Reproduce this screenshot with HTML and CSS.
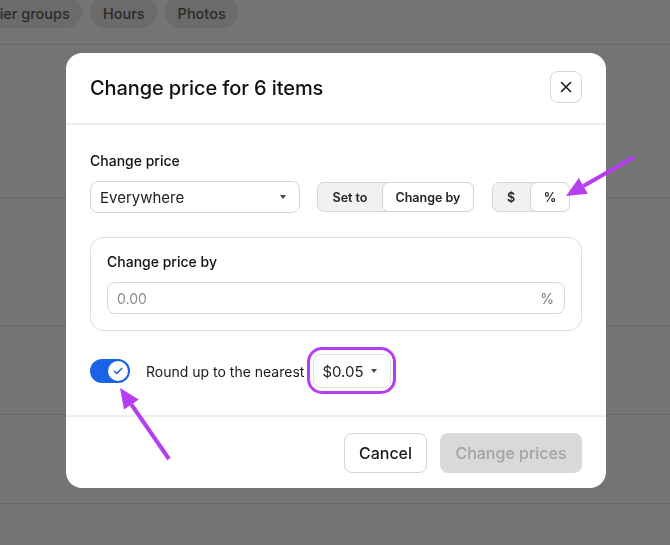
FILE: index.html
```html
<!DOCTYPE html>
<html lang="en">
<head>
<meta charset="utf-8">
<title>Change price</title>
<link rel="stylesheet" href="styles.css">
</head>
<body>
<div class="page">
  <div class="tabs">
    <span class="pill pill-first">Modifier groups</span>
    <span class="pill">Hours</span>
    <span class="pill">Photos</span>
  </div>
  <div class="row row-a"></div>
  <div class="row row-b"></div>
  <div class="row row-c"></div>
  <div class="row row-d"></div>
</div>

<div class="backdrop">
  <div class="modal">
    <div class="modal-header">
      <h1 class="modal-title">Change price for 6 items</h1>
      <button class="close-btn" aria-label="Close">
        <svg width="12" height="12" viewBox="0 0 12 12"><path d="M1.5 1.5 L10.5 10.5 M10.5 1.5 L1.5 10.5" stroke="#1a1a1a" stroke-width="1.6" stroke-linecap="round"/></svg>
      </button>
    </div>
    <div class="modal-body">
      <div class="field-label">Change price</div>
      <div class="controls">
        <div class="select select-wide">
          <span>Everywhere</span>
          <span class="caret"></span>
        </div>
        <div class="seg seg-mode">
          <span class="seg-item">Set to</span>
          <span class="seg-item active">Change by</span>
        </div>
        <div class="seg seg-unit">
          <span class="seg-item seg-dollar">$</span>
          <span class="seg-item seg-pct active">%</span>
        </div>
      </div>
      <div class="card">
        <div class="card-label">Change price by</div>
        <div class="input">
          <span class="placeholder">0.00</span>
          <span class="suffix">%</span>
        </div>
      </div>
      <div class="round-row">
        <div class="toggle">
          <span class="knob">
            <svg width="10" height="8" viewBox="0 0 10 8"><path d="M1.3 4.2 L3.8 6.5 L8.7 1.5" fill="none" stroke="#1a62e6" stroke-width="1.5" stroke-linecap="round" stroke-linejoin="round"/></svg>
          </span>
        </div>
        <span class="round-text">Round up to the nearest</span>
        <div class="ring-wrap">
          <div class="select select-small">
            <span>$0.05</span>
            <span class="caret"></span>
          </div>
          <span class="ring"></span>
        </div>
      </div>
    </div>
    <div class="modal-footer">
      <button class="btn btn-cancel">Cancel</button>
      <button class="btn btn-primary" disabled>Change prices</button>
    </div>
  </div>
</div>

<svg class="arrows" width="670" height="545" viewBox="0 0 670 545">
  <line x1="634" y1="157" x2="583.5" y2="186" stroke="#b53ef2" stroke-width="4"/>
  <polygon points="566,196 578.8,178.1 587.8,193.7" fill="#b53ef2"/>
  <line x1="169" y1="459" x2="131.4" y2="404.5" stroke="#b53ef2" stroke-width="4"/>
  <polygon points="120,388 138.8,399.4 124,409.6" fill="#b53ef2"/>
</svg>
</body>
</html>
```

FILE: styles.css
```css
* { box-sizing: border-box; }
html, body { margin: 0; padding: 0; }
body {
  width: 670px;
  height: 545px;
  overflow: hidden;
  background: #747474;
  font-family: Inter, "Noto Sans", "Liberation Sans", sans-serif;
  color: #1a1a1a;
}

/* dimmed background page */
.page { width: 670px; }
.tabs {
  height: 45px;
  border-bottom: 1px solid #686868;
  display: flex;
  align-items: flex-start;
  gap: 8px;
  overflow: hidden;
}
.pill {
  margin-top: -4px;
  height: 32px;
  padding: 6.5px 12.5px 0;
  border-radius: 16px;
  background: #6b6b6b;
  color: #2a2a2a;
  font-size: 14.5px;
  font-weight: 500;
  line-height: 22px;
  white-space: nowrap;
  flex: none;
}
.pill-first { margin-left: -53px; }
.row { border-bottom: 1px solid #686868; }
.row-a { height: 153px; }
.row-b { height: 128px; }
.row-c { height: 89px; }
.row-d { height: 89px; }

/* modal */
.backdrop {
  position: fixed;
  inset: 0;
  display: flex;
  justify-content: center;
  align-items: flex-start;
  padding-top: 53px;
  padding-left: 2px;
}
.modal {
  width: 540px;
  background: #fff;
  border-radius: 16px;
  overflow: hidden;
}
.modal-header {
  height: 72px;
  padding: 0 24px;
  display: flex;
  align-items: center;
  justify-content: space-between;
  border-bottom: 2px solid #ededed;
}
.modal-title {
  margin: 0;
  font-size: 20px;
  font-weight: 500;
  letter-spacing: -0.1px;
  color: #111;
}
.close-btn {
  width: 32px;
  height: 32px;
  border: 1px solid #d6d6d6;
  border-radius: 8px;
  background: #fff;
  display: flex;
  align-items: center;
  justify-content: center;
  padding: 0;
  margin-top: -2px;
}
.modal-body {
  padding: 26px 24px 27px;
}
.field-label {
  font-size: 14px;
  font-weight: 500;
  line-height: 20px;
  color: #111;
}
.controls {
  margin-top: 10px;
  display: flex;
  align-items: center;
}
.select {
  display: flex;
  align-items: center;
  justify-content: space-between;
  border: 1px solid #d4d4d4;
  border-radius: 8px;
  background: #fff;
  font-size: 15px;
  color: #222;
}
.select-wide {
  width: 210px;
  height: 32px;
  padding: 0 13px 0 9px;
}
.caret {
  width: 0;
  height: 0;
  border-left: 3.5px solid transparent;
  border-right: 3.5px solid transparent;
  border-top: 4px solid #444;
}
.seg {
  display: flex;
  height: 30px;
  background: #f1f1f1;
  border: 1px solid #d6d6d6;
  border-radius: 7px;
}
.seg-mode { margin-left: 17px; width: 157px; }
.seg-unit { margin-left: 18px; width: 78px; }
.seg-item {
  display: flex;
  align-items: center;
  justify-content: center;
  font-size: 12.5px;
  font-weight: 600;
  color: #222;
  margin: -1px 0;
  border: 1px solid transparent;
  border-radius: 7px;
}
.seg-mode .seg-item:first-child { width: 64px; }
.seg-mode .seg-item.active { flex: 1; margin-right: -1px; }
.seg-dollar { width: 38px; margin-left: -1px; }
.seg-pct { flex: 1; margin-right: -1px; }
.seg-item.active {
  background: #fff;
  border-color: #d4d4d4;
}

.card {
  margin-top: 24px;
  border: 1px solid #dedede;
  border-radius: 13px;
  padding: 14px 16px 16px;
}
.card-label {
  font-size: 14px;
  font-weight: 500;
  line-height: 20px;
  color: #111;
}
.input {
  margin-top: 10px;
  height: 32px;
  border: 1px solid #d6d6d6;
  border-radius: 8px;
  display: flex;
  align-items: center;
  justify-content: space-between;
  padding: 0 10px 0 9px;
  font-size: 14px;
}
.placeholder { color: #8c8c8c; }
.suffix { color: #777; font-size: 14px; }

.round-row {
  margin-top: 23px;
  display: flex;
  align-items: center;
}
.toggle {
  width: 40px;
  height: 24px;
  border-radius: 12px;
  background: #1a62e6;
  display: flex;
  align-items: center;
  justify-content: flex-end;
  padding-right: 2px;
}
.knob {
  width: 20px;
  height: 20px;
  border-radius: 50%;
  background: #fff;
  display: flex;
  align-items: center;
  justify-content: center;
}
.round-text {
  margin-left: 16px;
  font-size: 14px;
  color: #1a1a1a;
}
.ring-wrap {
  position: relative;
  margin-left: 9px;
}
.select-small {
  width: 78px;
  height: 34px;
  padding: 0 13px 0 8px;
  border-color: #e2e2e2;
}
.ring {
  position: absolute;
  left: -6px;
  top: -7px;
  right: -5px;
  bottom: -6px;
  border: 3px solid #b53ef2;
  border-radius: 15px;
}

.modal-footer {
  border-top: 2px solid #ededed;
  padding: 16px 24px 15px;
  display: flex;
  justify-content: flex-end;
  gap: 13px;
}
.btn {
  height: 40px;
  border-radius: 8px;
  font-family: inherit;
  font-size: 16px;
  font-weight: 500;
  padding: 0;
}
.btn-cancel {
  width: 83px;
  background: #fff;
  border: 1px solid #d4d4d4;
  color: #1a1a1a;
}
.btn-primary {
  width: 142px;
  background: #d9d9d9;
  border: none;
  color: #a3a3a3;
}

.arrows {
  position: fixed;
  left: 0;
  top: 0;
  pointer-events: none;
}
```
